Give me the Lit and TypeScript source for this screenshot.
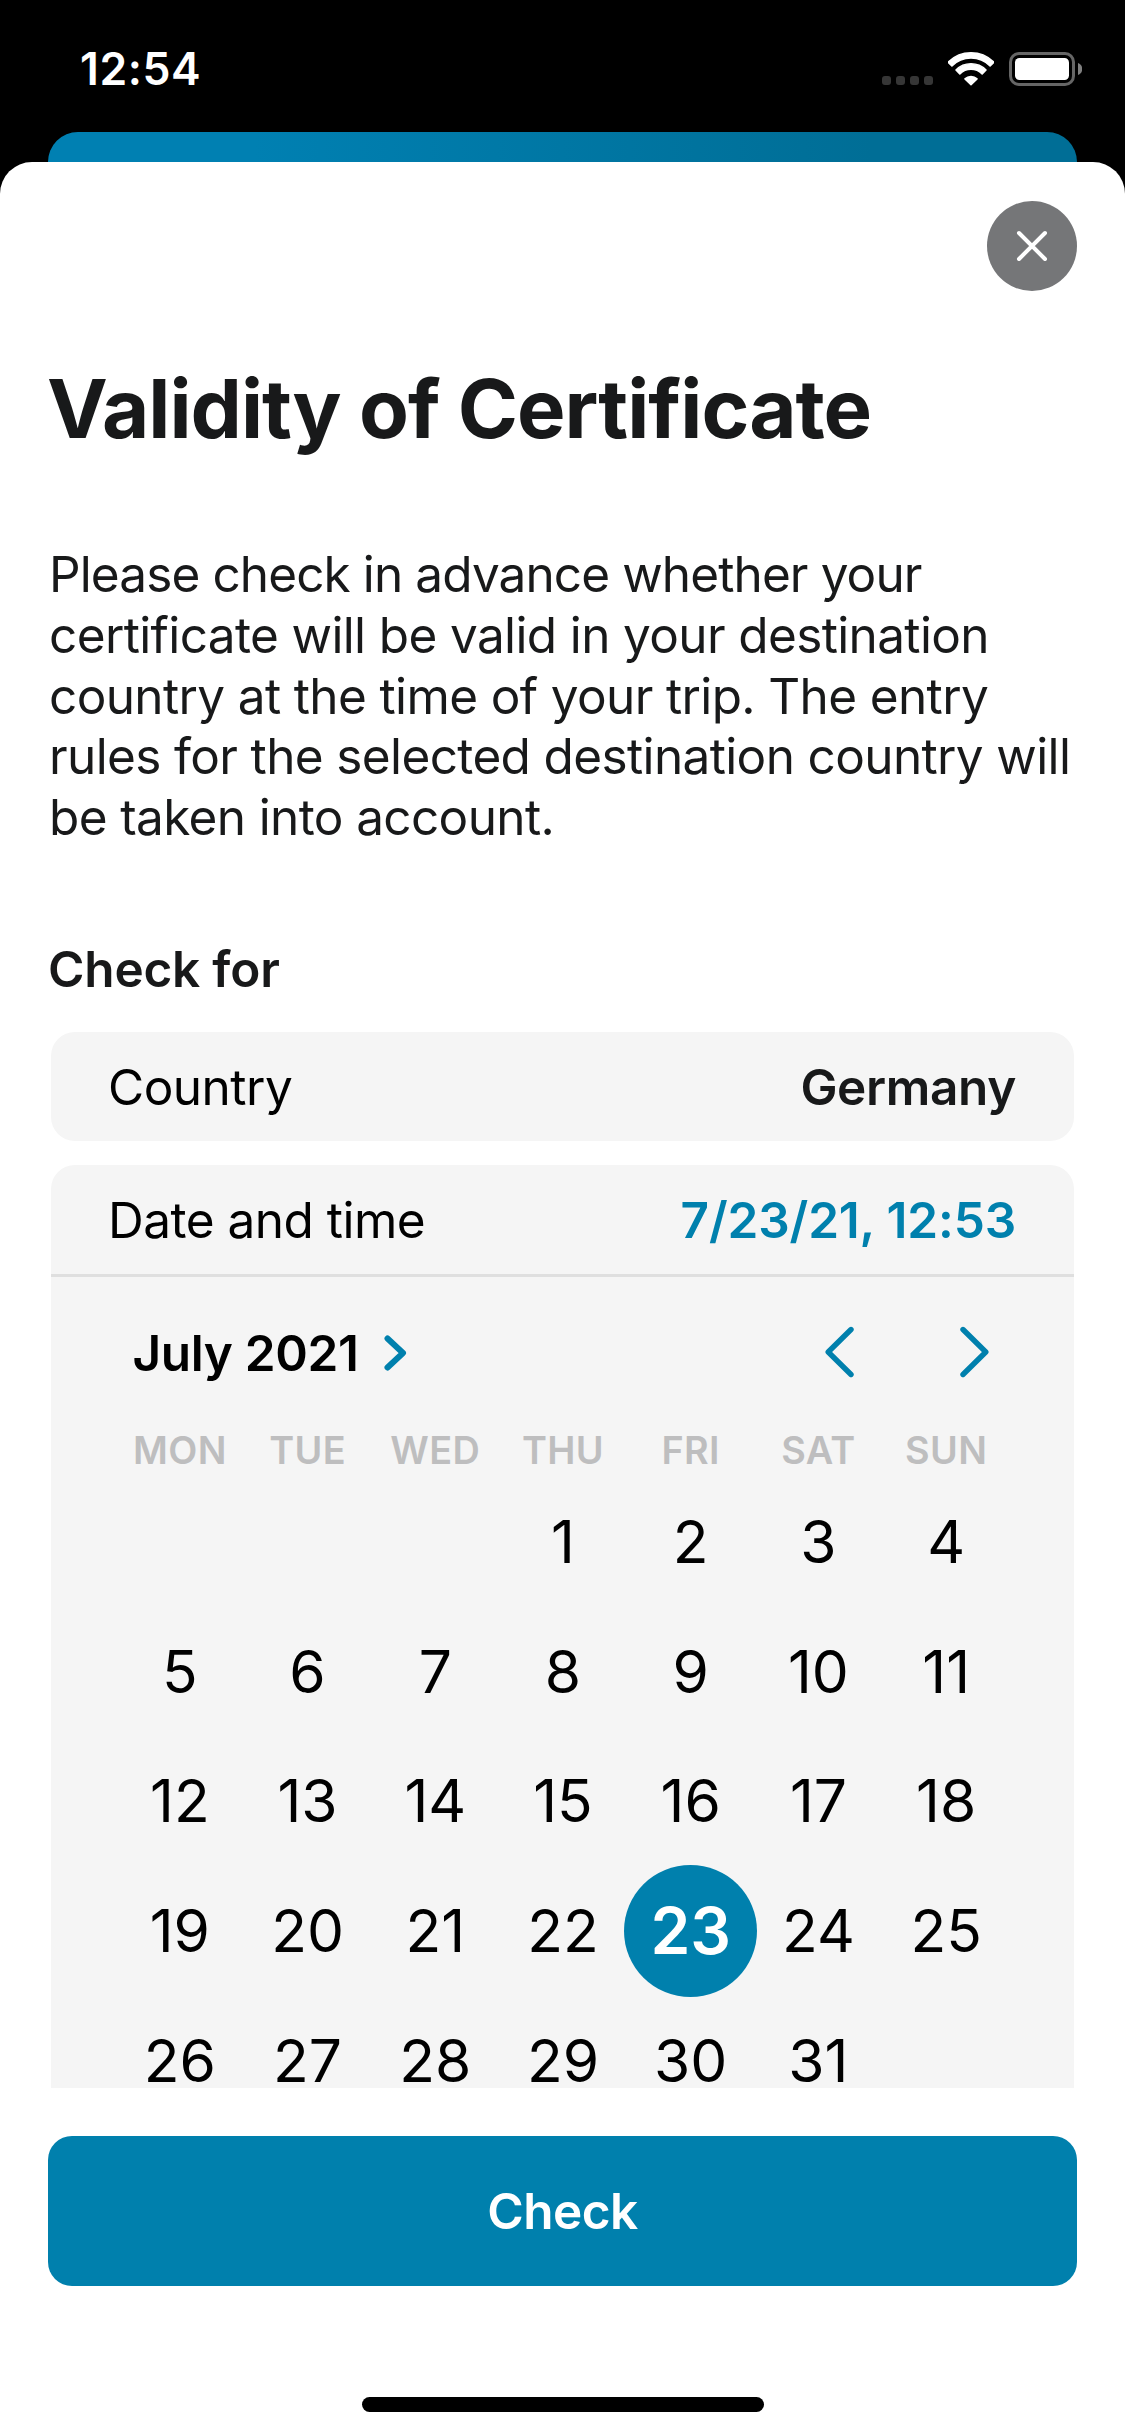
import { LitElement, html, css, svg } from "lit";
import { customElement, property } from "lit/decorators.js";
import { classMap } from "lit/directives/class-map.js";

const WEEKDAYS = ["MON", "TUE", "WED", "THU", "FRI", "SAT", "SUN"];
const LEADING_BLANKS = 3;
const DAYS_IN_MONTH = 31;

// Annular sector opening upwards, 45 degrees to each side of the vertical.
const sector = (outer: number, inner: number) => {
  const k = Math.SQRT1_2;
  const o = outer * k;
  const i = inner * k;
  return `M${23 - o} ${33 - o}A${outer} ${outer} 0 0 1 ${23 + o} ${33 - o}L${23 + i} ${33 - i}A${inner} ${inner} 0 0 0 ${23 - i} ${33 - i}Z`;
};

@customElement("status-bar")
export class StatusBar extends LitElement {
  static styles = css`
    :host {
      display: flex;
      justify-content: space-between;
      align-items: flex-start;
      height: 132px;
      padding: 52px 43px 0 80px;
      box-sizing: border-box;
      color: #fff;
    }
    .time {
      font-size: 44.5px;
      font-weight: 600;
      line-height: 34px;
      letter-spacing: 0.6px;
    }
    .indicators {
      display: flex;
      align-items: flex-start;
    }
    .dots {
      display: flex;
      gap: 5px;
      padding-top: 24px;
      margin-right: 15px;
    }
    .dot {
      width: 9px;
      height: 9px;
      border-radius: 3px;
      background: #363636;
    }
    .wifi {
      display: block;
      margin-right: 15px;
    }
    .battery {
      display: block;
    }
  `;
  render() {
    return html`
      <span class="time">12:54</span>
      <div class="indicators">
        <div class="dots">
          ${[0, 1, 2, 3].map(() => html`<span class="dot"></span>`)}
        </div>
        <svg class="wifi" width="46" height="34" viewBox="0 0 46 34" fill="#fff" stroke="#fff" stroke-width="1.6" stroke-linejoin="round">
          ${[[32.2, 27], [21.2, 15.8]].map(([o, i]) => svg`<path d=${sector(o, i)} />`)}
          <path d="M17 26.9A8.6 8.6 0 0 1 29 26.9L23 32.6Z" />
        </svg>
        <svg class="battery" width="73" height="34" viewBox="0 0 73 34">
          <rect x="1.5" y="1.5" width="63" height="31" rx="8.5" fill="none" stroke="#666" stroke-width="3" />
          <rect x="6" y="6" width="54" height="22" rx="4.5" fill="#fff" />
          <path d="M69 11c2.8.9 4.200 3.200 4.200 6s-1.400 5.100-4.200 6z" fill="#808080" />
        </svg>
      </div>
    `;
  }
}

@customElement("month-calendar")
export class MonthCalendar extends LitElement {
  @property({ type: Number }) selected = 23;

  static styles = css`
    :host {
      display: block;
      padding: 0 64px 0 65px;
      color: #000;
    }
    .header {
      display: flex;
      align-items: center;
      height: 152px;
      padding: 0 21px 0 16.5px;
    }
    .month {
      font-size: 49.5px;
      font-weight: 600;
      letter-spacing: -0.35px;
      line-height: 60px;
    }
    .expand {
      margin-left: 25px;
    }
    .arrows {
      display: flex;
      gap: 106px;
      margin-left: auto;
      padding-bottom: 2px;
    }
    svg {
      display: block;
      fill: none;
      stroke: #0080ad;
      stroke-linecap: round;
      stroke-linejoin: round;
    }
    .grid {
      display: grid;
      grid-template-columns: repeat(7, minmax(0, 1fr));
      justify-items: center;
      align-items: center;
    }
    .weekdays {
      height: 42px;
      margin-bottom: 6px;
      font-size: 37.8px;
      font-weight: 600;
      line-height: 42px;
      letter-spacing: 0.4px;
      color: #bebebf;
    }
    .days {
      grid-auto-rows: 129.8px;
    }
    .day {
      font-size: 58.7px;
      line-height: 50px;
    }
    .selected {
      display: flex;
      align-items: center;
      justify-content: center;
      width: 133px;
      height: 132px;
      margin: -2px -3px;
      border-radius: 50%;
      background: #0080ad;
      color: #fff;
      font-size: 64px;
      font-weight: 600;
    }
  `;
  render() {
    const days = Array.from({ length: DAYS_IN_MONTH }, (_, i) => i + 1);
    return html`
      <div class="header">
        <span class="month">July 2021</span>
        <svg class="expand" width="23" height="36" viewBox="0 0 23 36" stroke-width="6"><path d="M3.500 3.500L19 18L3.500 32.500" /></svg>
        <div class="arrows">
          <svg width="29" height="52" viewBox="0 0 29 52" stroke-width="5.400"><path d="M26 3.500L3.200 26L26 48.500" /></svg>
          <svg width="29" height="52" viewBox="0 0 29 52" stroke-width="5.400"><path d="M3 3.500L25.800 26L3 48.500" /></svg>
        </div>
      </div>
      <div class="grid weekdays">${WEEKDAYS.map((d) => html`<span>${d}</span>`)}</div>
      <div class="grid days">
        ${Array.from({ length: LEADING_BLANKS }, () => html`<span></span>`)}
        ${days.map((d) => html`<span class=${classMap({ day: true, selected: d === this.selected })}>${d}</span>`)}
      </div>
    `;
  }
}

@customElement("app-root")
export class AppRoot extends LitElement {
  static styles = css`
    :host {
      display: flex;
      flex-direction: column;
      width: 1125px;
      height: 2436px;
      overflow: hidden;
      background: #000;
      font-family: Inter, "Liberation Sans", sans-serif;
      color: #18191a;
    }
    .behind {
      flex: none;
      height: 30px;
      margin: 0 48px;
      border-radius: 30px 30px 0 0;
      background: linear-gradient(90deg, #0080b2 20%, #006e96 80%);
    }
    .sheet {
      flex: 1;
      min-height: 0;
      display: flex;
      flex-direction: column;
      padding: 39px 48px 24px;
      border-radius: 32px 32px 0 0;
      background: #fff;
    }
    .close {
      align-self: flex-end;
      flex: none;
      display: flex;
      align-items: center;
      justify-content: center;
      width: 90px;
      height: 90px;
      padding: 0;
      border: 0;
      border-radius: 50%;
      background: #757678;
    }
    .title {
      margin: 68px 0 0 -1px;
      font-size: 81.5px;
      font-weight: 700;
      line-height: 100px;
      letter-spacing: -1px;
      white-space: nowrap;
    }
    .intro {
      margin: 85px 0 0;
      padding-left: 1px;
      font-size: 49.5px;
      line-height: 60.8px;
      letter-spacing: -0.63px;
      white-space: nowrap;
    }
    .lead {
      letter-spacing: -0.89px;
    }
    .subtitle {
      margin: 91px 0 33px;
      font-size: 49.5px;
      font-weight: 600;
      line-height: 60px;
      letter-spacing: -0.2px;
    }
    .card {
      flex: none;
      margin: 0 3px;
      border-radius: 24px;
      background: #f5f5f5;
    }
    .expanded {
      flex: 1;
      min-height: 0;
      margin-top: 24px;
      border-radius: 24px 24px 0 0;
    }
    .row {
      box-sizing: border-box;
      display: flex;
      align-items: center;
      justify-content: space-between;
      height: 109px;
      padding: 1px 58px 0 57px;
      font-size: 49.5px;
      line-height: 60px;
    }
    .label {
      color: #000;
      letter-spacing: -0.5px;
    }
    .value {
      font-weight: 600;
      letter-spacing: -0.35px;
    }
    .date {
      color: #0080ad;
      letter-spacing: -0.15px;
    }
    .divider {
      height: 3px;
      background: #dfdfdf;
    }
    .check {
      flex: none;
      height: 150px;
      margin-top: 48px;
      padding: 0;
      border: 0;
      border-radius: 24px;
      background: #0080ad;
      color: #fff;
      font-family: inherit;
      font-size: 49.5px;
      font-weight: 600;
      letter-spacing: -0.5px;
    }
    .home {
      flex: none;
      align-self: center;
      width: 402px;
      height: 15px;
      margin-top: 111px;
      border-radius: 8px;
      background: #000;
    }
  `;
  render() {
    return html`
      <status-bar></status-bar>
      <div class="behind"></div>
      <main class="sheet">
        <button class="close" aria-label="Close">
          <svg width="32" height="32" viewBox="0 0 32 32" stroke="#fff" stroke-width="4" stroke-linecap="round">
            <path d="M3 3L29 29M29 3L3 29" />
          </svg>
        </button>
        <h1 class="title">Validity of Certificate</h1>
        <p class="intro">
          <span class="lead">Please check in advance whether your</span><br />certificate will be valid in your
          destination<br />country at the time of your trip. The entry<br />rules for the selected destination
          country will<br />be taken into account.
        </p>
        <h2 class="subtitle">Check for</h2>
        <section class="card row">
          <span class="label">Country</span><span class="value">Germany</span>
        </section>
        <section class="card expanded">
          <div class="row">
            <span class="label">Date and time</span><span class="value date">7/23/21, 12:53</span>
          </div>
          <div class="divider"></div>
          <month-calendar .selected=${23}></month-calendar>
        </section>
        <button class="check">Check</button>
        <div class="home"></div>
      </main>
    `;
  }
}
